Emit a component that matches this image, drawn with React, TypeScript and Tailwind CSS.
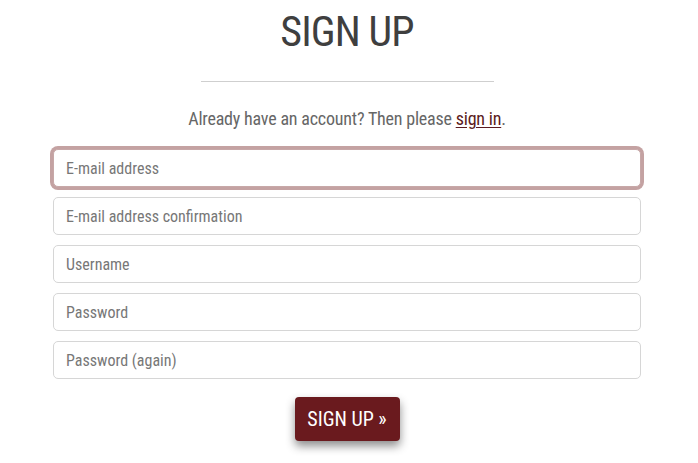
import React from "react";

const fields = [
  "E-mail address",
  "E-mail address confirmation",
  "Username",
  "Password",
  "Password (again)",
];

export default function App() {
  return (
    <div
      className="w-[698px] h-[463px] bg-white overflow-hidden"
      style={{ fontFamily: '"Roboto Condensed", Roboto, sans-serif' }}
    >
      <div className="flex flex-col items-center pt-[9px] pr-[4px]">
        <h1 className="text-[42px] leading-[46px] font-normal text-[#3f3f3f] tracking-[-0.9px]">SIGN UP</h1>
        <div className="w-[293px] h-px bg-[#cfcfcf] mt-[26px]" />
        <p className="mt-[25px] text-[18px] leading-[24px] text-[#666] tracking-[-0.2px]">
          Already have an account? Then please{" "}
          <a href="#" className="text-[#5b1a20] underline underline-offset-2">sign in</a>.
        </p>
        <form className="mt-[18px] w-[588px] flex flex-col gap-[10px]">
          {fields.map((f, i) => (
            <input
              key={f}
              type="text"
              placeholder={f}
              className={
                "h-[38px] w-full rounded-[5px] bg-white px-3 text-[16px] text-[#333] placeholder:text-[#777] outline-none " +
                (i === 0
                  ? "border border-[#c7a8a8] shadow-[0_0_0_3px_#c4a2a2]"
                  : "border border-[#d6d6d6]")
              }
            />
          ))}
          <div className="flex justify-center mt-[8px]">
            <button
              type="button"
              className="h-[44px] w-[105px] rounded-[4px] bg-[#6a1a1e] text-white text-[20px] shadow-[0_5px_10px_rgba(0,0,0,0.45)]"
            >
              SIGN UP »
            </button>
          </div>
        </form>
      </div>
    </div>
  );
}
